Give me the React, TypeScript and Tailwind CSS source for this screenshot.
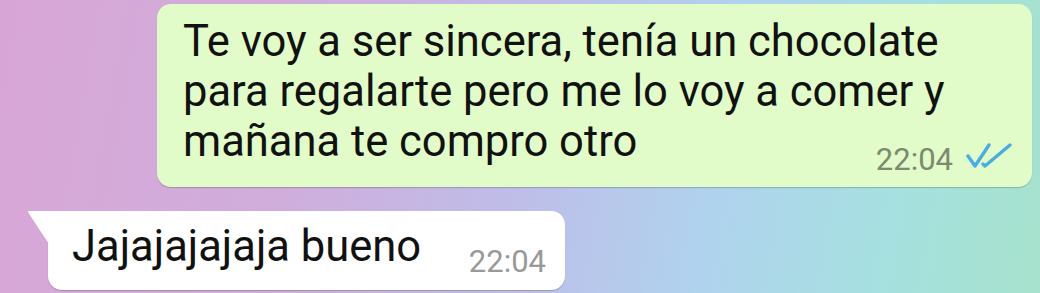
const DoubleCheck = () => (
  <svg width="46" height="26" viewBox="0 0 46 26" fill="none" stroke="#48ade2" strokeWidth="3.4" strokeLinecap="round" strokeLinejoin="round">
    <path d="M2 13 L9 23 L23 2" />
    <path d="M17 21 L19 23 L44 2" />
  </svg>
);

const App = () => {
  return (
    <div
      className="w-[1040px] h-[293px] overflow-hidden bg-[linear-gradient(100deg,#d8a6d6_0%,#cfaedc_30%,#bfbde8_50%,#b0d2ee_68%,#a6e0e0_85%,#a6e2cc_100%)]"
      style={{ fontFamily: "Roboto, 'Noto Sans', sans-serif" }}
    >
      <div className="flex flex-col pt-[4px]">
        <div className="flex justify-end pr-[8px]">
          <div className="w-[875px] h-[183px] rounded-[14px] bg-[#e1fcc8] shadow-[0_1px_1px_rgba(0,0,0,0.2)] pl-[26px] pr-[20px] pt-[13px]">
            <p className="text-[43.5px] leading-[50px] text-[#111]">
              Te voy a ser sincera, tenía un chocolate
              <br />
              para regalarte pero me lo voy a comer y
            </p>
            <div className="flex items-start justify-between">
              <span className="text-[43.5px] leading-[50px] text-[#111]">mañana te compro otro</span>
              <div className="flex items-center gap-[13px] mt-[27px]">
                <span className="text-[31px] leading-none text-[#7d8a70]">22:04</span>
                <div className="mt-[-7px]">
                  <DoubleCheck />
                </div>
              </div>
            </div>
          </div>
        </div>

        <div className="flex pl-[28px] mt-[24px]">
          <div className="relative w-[517px] h-[79px] rounded-[14px] rounded-tl-none bg-white shadow-[0_1px_1px_rgba(0,0,0,0.2)] ml-[20px] flex items-start pl-[24px] pr-[19px] pt-[11px]">
            <svg className="absolute left-[-20px] top-0" width="21" height="33" viewBox="0 0 21 33">
              <path d="M0 0 L21 0 L21 33 L1.5 3.5 Q0 1 0 0 Z" fill="#fff" />
            </svg>
            <span className="text-[43.5px] leading-[50px] text-[#111]">Jajajajajaja bueno</span>
            <span className="text-[31px] leading-none text-[#999] ml-auto mt-[24px]">22:04</span>
          </div>
        </div>
      </div>
    </div>
  );
};

export default App;
